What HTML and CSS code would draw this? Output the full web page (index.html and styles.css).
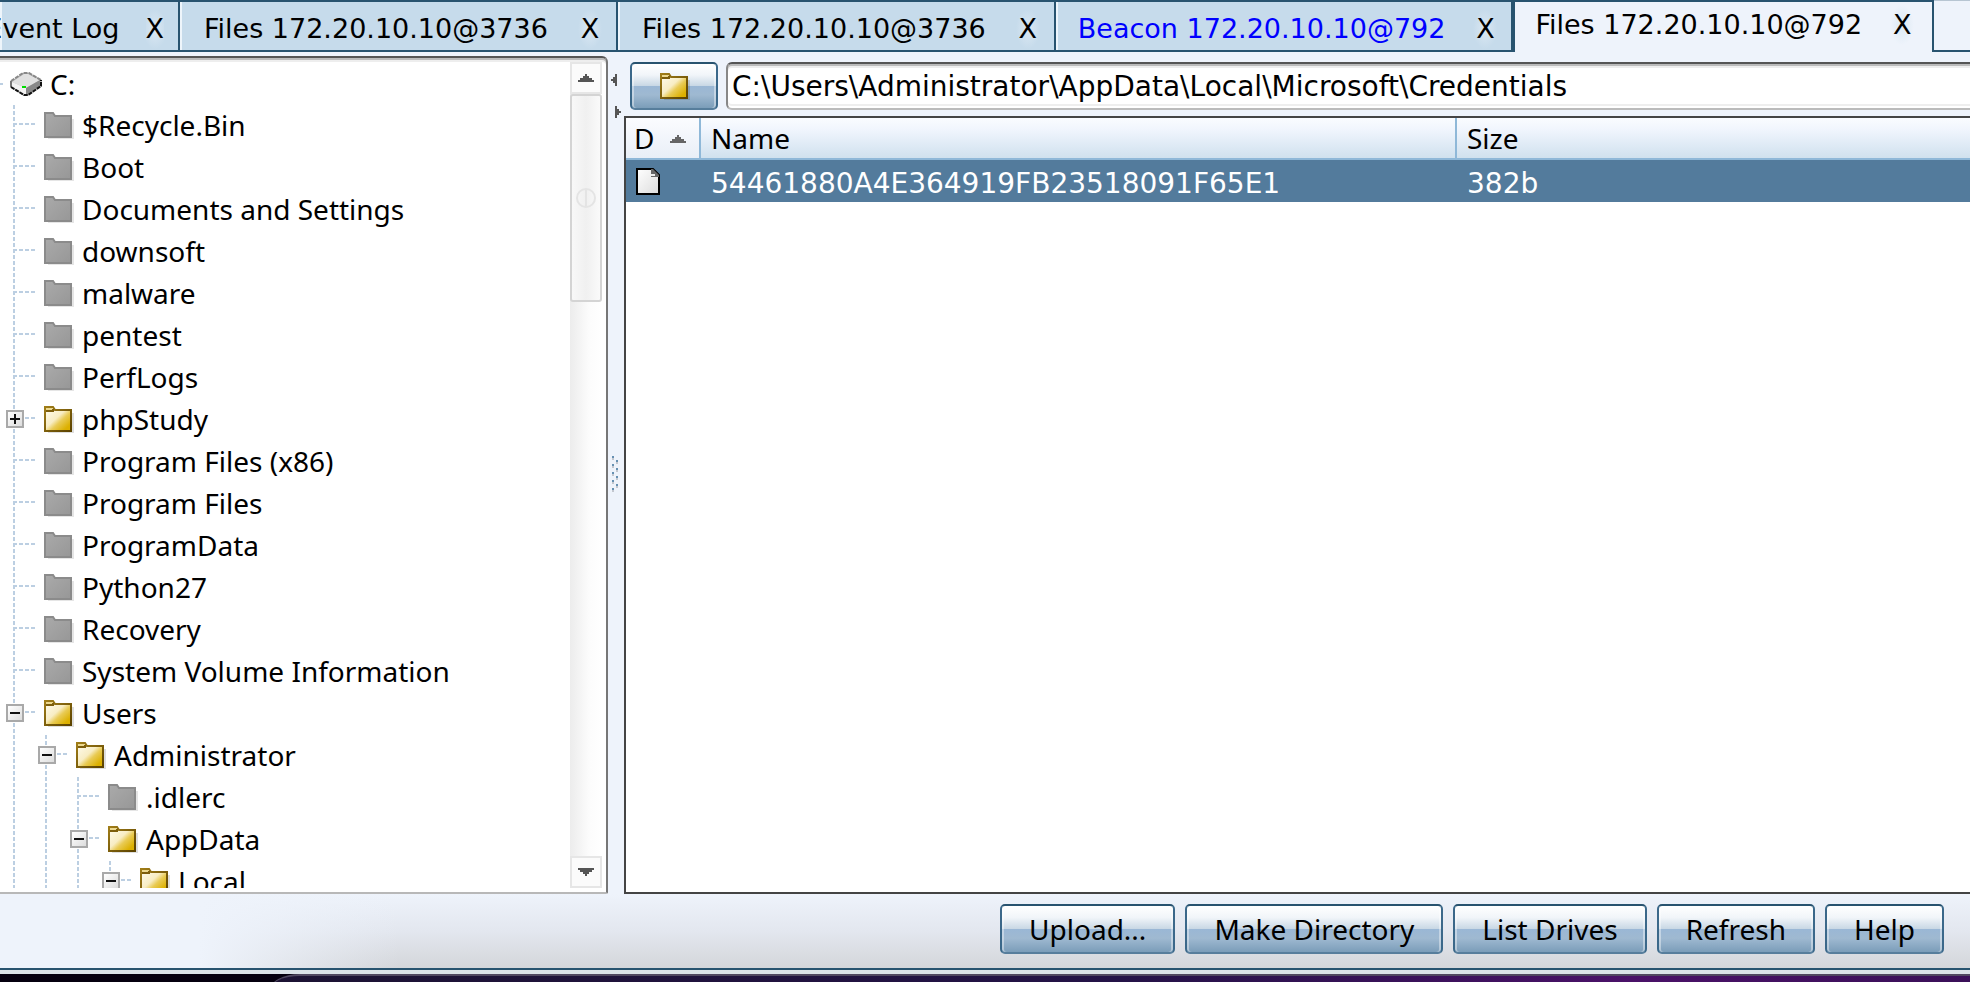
FILE: index.html
```html
<!DOCTYPE html>
<html lang="en">
<head>
<meta charset="utf-8">
<title>Files 172.20.10.10@792</title>
<link rel="stylesheet" href="styles.css">
</head>
<body>
<svg class="defs" aria-hidden="true">
  <defs>
    <linearGradient id="gold" x1="0" y1="0" x2="1" y2="1">
      <stop offset="0" stop-color="#fffdf2"/><stop offset=".45" stop-color="#f8edc4"/><stop offset=".6" stop-color="#e9cb55"/><stop offset=".85" stop-color="#dcb000"/>
    </linearGradient>
    <linearGradient id="edge" x1="0" y1="0" x2="1" y2="1">
      <stop offset="0" stop-color="#a07d18"/><stop offset="1" stop-color="#5c4300"/>
    </linearGradient>
    <linearGradient id="grey" x1="0" y1="0" x2="1" y2="1">
      <stop offset="0" stop-color="#aaa"/><stop offset="1" stop-color="#979797"/>
    </linearGradient>
    <linearGradient id="paper" x1="0" y1="0" x2="1" y2="1">
      <stop offset="0" stop-color="#fff"/><stop offset="1" stop-color="#dcdcdc"/>
    </linearGradient>
    <symbol id="folder" viewBox="0 0 32 30">
      <path d="M4 8h26v20H4z" fill="#000" opacity=".13"/>
      <path d="M1 26V2h8l2 3h16v21z" fill="url(#gold)" stroke="url(#edge)" stroke-width="2"/>
      <path d="M2 3h7v2H2z" fill="#ecd88e"/><path d="M2 6h7V4" fill="none" stroke="#7d5e0c" stroke-width="2"/>
    </symbol>
    <symbol id="closed" viewBox="0 0 32 30">
      <path d="M4 8h26v20H4z" fill="#000" opacity=".1"/>
      <path d="M1 26V2h8l2 3h16v21z" fill="url(#grey)" stroke="#8b8b8b" stroke-width="2"/>
    </symbol>
    <symbol id="drive" viewBox="0 0 32 24">
      <path d="M0 10 13 1h6l13 7v6L18 24h-4L0 15z" fill="#b5b5b5"/>
      <path d="M2 10 14 2h4l12 6-14 8z" fill="#e0e0e0"/>
      <path d="M2 10l14 6v7L2 15z" fill="#f2f2f2"/><path d="m16 16 14-8v6l-14 9z" fill="#888"/>
      <path d="M1 9 13 1h6l12 7" fill="none" stroke="#888" stroke-width="2" stroke-dasharray="4 1"/>
      <path d="M1 9v6" stroke="#777" stroke-width="2"/>
      <path d="m1 15 13 8h4l13-9V8" fill="none" stroke="#111" stroke-width="2" stroke-dasharray="4 1"/>
      <path d="M12 14h4v2h-4z" fill="#0d0"/>
    </symbol>
  </defs>
</svg>
<div class="app">
  <nav class="tabs">
    <div class="tab tab-first"><button class="tab-name">Event Log</button><button class="tab-close">X</button></div>
    <div class="tab"><button class="tab-name">Files 172.20.10.10@3736</button><button class="tab-close">X</button></div>
    <div class="tab"><button class="tab-name">Files 172.20.10.10@3736</button><button class="tab-close">X</button></div>
    <div class="tab tab-last"><button class="tab-name active-beacon">Beacon 172.20.10.10@792</button><button class="tab-close">X</button></div>
    <div class="tab selected"><button class="tab-name">Files 172.20.10.10@792</button><button class="tab-close">X</button></div>
    <div class="tab-rest"></div>
  </nav>
  <main class="split">
    <section class="tree-panel">
      <div class="tree-view">
        <ul class="tree">
          <li class="root"><div class="drive-row"><i class="root-dash"></i><svg class="drive"><use href="#drive"/></svg>C:</div>
          <ul>
            <li><div class="row"><svg><use href="#closed"/></svg>$Recycle.Bin</div></li>
            <li><div class="row"><svg><use href="#closed"/></svg>Boot</div></li>
            <li><div class="row"><svg><use href="#closed"/></svg>Documents and Settings</div></li>
            <li><div class="row"><svg><use href="#closed"/></svg>downsoft</div></li>
            <li><div class="row"><svg><use href="#closed"/></svg>malware</div></li>
            <li><div class="row"><svg><use href="#closed"/></svg>pentest</div></li>
            <li><div class="row"><svg><use href="#closed"/></svg>PerfLogs</div></li>
            <li><div class="row"><button class="toggle plus" aria-label="Expand phpStudy"></button><svg><use href="#folder"/></svg>phpStudy</div></li>
            <li><div class="row"><svg><use href="#closed"/></svg>Program Files (x86)</div></li>
            <li><div class="row"><svg><use href="#closed"/></svg>Program Files</div></li>
            <li><div class="row"><svg><use href="#closed"/></svg>ProgramData</div></li>
            <li><div class="row"><svg><use href="#closed"/></svg>Python27</div></li>
            <li><div class="row"><svg><use href="#closed"/></svg>Recovery</div></li>
            <li><div class="row"><svg><use href="#closed"/></svg>System Volume Information</div></li>
            <li><div class="row"><button class="toggle" aria-label="Collapse Users"></button><svg><use href="#folder"/></svg>Users</div>
              <ul>
                <li><div class="row"><button class="toggle" aria-label="Collapse Administrator"></button><svg><use href="#folder"/></svg>Administrator</div>
                  <ul>
                    <li><div class="row"><svg><use href="#closed"/></svg>.idlerc</div></li>
                    <li><div class="row"><button class="toggle" aria-label="Collapse AppData"></button><svg><use href="#folder"/></svg>AppData</div>
                      <ul>
                        <li><div class="row"><button class="toggle" aria-label="Collapse Local"></button><svg><use href="#folder"/></svg>Local</div></li>
                      </ul>
                    </li>
                  </ul>
                </li>
              </ul>
            </li>
          </ul></li>
        </ul>
      </div>
      <div class="scrollbar">
        <button class="scroll-btn" aria-label="Scroll up"><svg viewBox="0 0 16 8"><path d="M7 0h2v2h2v2h3v2h2v2H0V6h2V4h3V2h2z"/></svg></button>
        <div class="thumb"><i class="knob"></i></div>
        <button class="scroll-btn down" aria-label="Scroll down"><svg viewBox="0 0 16 8"><path d="M7 8h2V6h2V4h3V2h2V0H0v2h2v2h3v2h2z"/></svg></button>
      </div>
    </section>
    <div class="splitter">
      <svg class="split-arrow" viewBox="0 0 8 12"><path d="M6 0v12H4V9H2V7H0V5h2V3h2V0z"/></svg>
      <svg class="split-arrow right" viewBox="0 0 8 12"><path d="M2 0v12h2V9h2V7h2V5H6V3H4V0z"/></svg>
      <i class="grip"></i>
    </div>
    <section class="files">
      <form class="path-bar">
        <button class="btn up" type="button" aria-label="Parent folder"><svg><use href="#folder"/></svg></button>
        <input class="path" aria-label="Path" value="C:\Users\Administrator\AppData\Local\Microsoft\Credentials">
      </form>
      <div class="list">
        <table>
          <colgroup><col class="col-d"><col class="col-name"><col></colgroup>
          <thead><tr><th class="sorted">D<svg viewBox="0 0 16 8"><path d="M7 0h2v2h2v2h3v2h2v2H0V6h2V4h3V2h2z"/></svg></th><th>Name</th><th>Size</th></tr></thead>
          <tbody><tr><td class="kind"><svg viewBox="0 0 24 28"><path d="M1 2h16l6 6v19H1z" fill="url(#paper)" stroke="#000" stroke-width="2"/><path d="M15 2h2l6 6v2h-8z" fill="#666"/><path d="M15 8h4" stroke="#eee" stroke-width="2"/></svg></td><td>54461880A4E364919FB23518091F65E1</td><td>382b</td></tr></tbody>
        </table>
      </div>
    </section>
  </main>
  <footer class="actions">
    <button class="btn">Upload...</button>
    <button class="btn">Make Directory</button>
    <button class="btn">List Drives</button>
    <button class="btn">Refresh</button>
    <button class="btn">Help</button>
  </footer>
  <div class="desktop"><div class="window-edge"></div></div>
</div>
</body>
</html>
```

FILE: styles.css
```css
* { box-sizing: border-box; }
body { margin: 0; background: #eef3fb; }
body, button, input { font: 28px/42px "Noto Sans", sans-serif; color: #000; }
button { margin: 0; padding: 0; border: 0; background: none; }
ul { margin: 0; padding: 0; list-style: none; }
.defs { position: absolute; width: 0; height: 0; }
.app { display: flex; flex-direction: column; height: 100vh; overflow: hidden; }

.tabs { display: flex; flex: none; height: 52px; }
.tab { display: flex; flex: none; gap: 26px; padding: 6px 10px 0 24px; background: #c6dbeb; border: solid #28536f; border-width: 2px 2px 2px 0; box-shadow: inset 2px 0 #eef5fb; white-space: nowrap; }
.tab-first { width: 180px; justify-content: flex-end; padding-right: 14px; padding-left: 0; }
.tab-last { gap: 24px; padding-left: 22px; border-right-width: 4px; }
.tab-name, .tab-close { font: 27px/42px "DejaVu Sans", sans-serif; }
.tab-close { width: 32px; background: radial-gradient(ellipse 12px 20px, #dbe8f3, transparent); }
.active-beacon { color: #00f; }
.tab.selected { gap: 24px; padding: 0 14px 4px 20px; background: #eef3fb; border-bottom: 0; box-shadow: none; }
.tab-rest { flex: 1; border-bottom: 2px solid #28536f; border-top: 1px solid #b7c5d2; }

.split { display: flex; flex: 1; min-height: 0; padding-top: 4px; }
.tree-panel { display: flex; flex: none; width: 608px; padding: 2px 4px 2px 0; background: #fff; border: solid; border-width: 2px 2px 2px 0; border-color: #555 #777 #b8b8b8; border-radius: 0 6px 2px 0; box-shadow: inset 0 2px #bbb, inset 0 4px #eee; }
.tree-view { flex: 1; overflow: hidden; padding-top: 3px; margin-bottom: 2px; }
.root > ul { margin-left: 13px; }
.drive-row { display: flex; align-items: center; height: 42px; line-height: 40px; }
.root-dash { width: 3px; height: 2px; margin-right: 7px; background: #bccfe2; }
.drive { width: 32px; height: 24px; margin-right: 8px; }
.tree ul ul { margin-left: 32px; }
.tree ul > li { background: repeating-linear-gradient(#bccfe2 0 4px, transparent 4px 6px) 0 0 / 2px 100% no-repeat; }
.row { position: relative; display: flex; align-items: flex-start; height: 42px; line-height: 40px; padding-left: 31px; white-space: nowrap; background: repeating-linear-gradient(90deg, #bccfe2 0 4px, transparent 4px 6px) 0 18px / 22px 2px no-repeat; }
.row svg { width: 32px; height: 30px; margin: 6px 6px 0 0; }
.toggle { position: absolute; left: -7px; top: 11px; width: 18px; height: 18px; border: 2px solid #a9a9a9; background: linear-gradient(#111, #111) center / 10px 2px no-repeat, linear-gradient(135deg, #fff, #ddd); }
.toggle.plus { background: linear-gradient(#111, #111) center / 10px 2px no-repeat, linear-gradient(#111, #111) center / 2px 10px no-repeat, linear-gradient(135deg, #fff, #ddd); }

.scrollbar { display: flex; flex-direction: column; flex: none; width: 32px; margin: 2px 0; background: linear-gradient(90deg, #ececec, #fcfcfc 60%, #fff); }
.scroll-btn { display: flex; align-items: center; justify-content: center; height: 32px; background: #fbfbfb; border: 2px solid #e6e6e6; }
.scroll-btn svg { width: 16px; height: 8px; fill: #555; }
.scroll-btn.down { margin-top: auto; }
.thumb { display: flex; align-items: center; justify-content: center; height: 208px; border: 2px solid #d4d4d4; border-radius: 3px; background: linear-gradient(90deg, #f8f8f8, #f0f0f0 50%, #fafafa); }
.knob { width: 20px; height: 20px; border: 2px solid #e4e4e4; border-radius: 50%; background: linear-gradient(#e4e4e4, #e4e4e4) center / 2px 16px no-repeat; }

.splitter { display: flex; flex-direction: column; flex: none; width: 16px; padding: 18px 0 0 3px; }
.split-arrow { width: 8px; height: 12px; fill: #555; }
.split-arrow.right { margin: 20px 0 0 2px; }
.grip { width: 6px; height: 36px; margin: 338px 0 0 1px; background: repeating-linear-gradient(#6690b2 0 2px, #c3c7cf 2px 4px, transparent 4px 8px) 0 0 / 2px 36px no-repeat, repeating-linear-gradient(#6690b2 0 2px, #c3c7cf 2px 4px, transparent 4px 8px) 4px 4px / 2px 28px no-repeat; }

.files { display: flex; flex-direction: column; flex: 1; min-width: 0; }
.path-bar { display: flex; gap: 8px; margin: 0; padding: 6px 0 6px 6px; }
.btn { height: 50px; padding: 0 26px; border: 2px solid; border-color: #28536f #3b688a #577e9c; border-radius: 5px; background: linear-gradient(#fff, #f1f5f9 25%, #c9d8e5 49%, #9ab7d5 50%, #9fb9d1 70%, #7b9db9); box-shadow: inset 2px 0 #ffffff66, inset -2px 0 #ffffff66; line-height: 42px; }
.btn.up { display: flex; align-items: center; justify-content: center; flex: none; width: 88px; height: 48px; padding: 2px 0 0 4px; }
.up svg { width: 32px; height: 30px; }
.path { flex: 1; min-width: 0; height: 48px; padding: 0 4px; border: solid; border-width: 2px 0 2px 2px; border-color: #555 #999 #bbb #888; border-radius: 6px 0 0 6px; background: #fff; box-shadow: inset 0 2px #bbb, inset 0 4px #eee, inset 0 -2px #fff, inset 0 -4px #eee; font-family: "DejaVu Sans", sans-serif; }
.list { flex: 1; background: #fff; border: solid #444; border-width: 2px 0 2px 2px; }
table { width: 100%; border-collapse: separate; border-spacing: 0; table-layout: fixed; }
.col-d { width: 75px; }
.col-name { width: 756px; }
th { height: 42px; padding: 0 10px; text-align: left; font-weight: 400; line-height: 40px; background: linear-gradient(#fafcff, #f0f5fd 30%, #d0e1ee); border-bottom: 2px solid #8fb8d8; border-right: 2px solid #8fb8d8; }
th.sorted { padding: 0 0 0 8px; background: linear-gradient(#fbfcff, #e9eff7); }
th:last-child { border-right: 0; }
.sorted svg { width: 16px; height: 8px; margin: 0 0 6px 16px; fill: #666; }
td { height: 42px; padding: 4px 10px 0; font-family: "DejaVu Sans", sans-serif; line-height: 38px; color: #fff; background: #537b9c; }
td + td { padding-top: 6px; line-height: 36px; }
.kind { padding: 0 0 0 10px; }
.kind svg { display: block; width: 24px; height: 28px; }

.actions { display: flex; flex: none; justify-content: flex-end; gap: 10px; height: 76px; padding: 10px 26px 0 0; border-bottom: 2px solid #28536f; background: linear-gradient(90deg, #eef3fb 200px, transparent 400px), linear-gradient(#eef3fb, #e3e7ef 50%, #d4d6da); }
.actions .btn { padding: 0 27px; }
.desktop { flex: none; height: 12px; padding-top: 4px; background: linear-gradient(#dbe3e8 4px, #05000f 4px); }
.window-edge { height: 20px; margin-left: 270px; border-top: 2px solid #504860; border-top-left-radius: 30px 16px; background: linear-gradient(90deg, #1c1333, #241347 50%, #4a1168 80%, #3a1058); }
```
